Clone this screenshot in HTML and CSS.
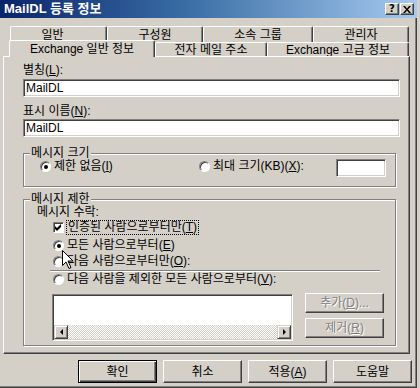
FILE: index.html
```html
<!DOCTYPE html>
<html lang="ko">
<head>
    <meta charset="UTF-8">
    <title>MailDL 등록 정보</title>
    <link rel="stylesheet" href="styles.css">
</head>
<body>
    <div class="window">
        <div class="titlebar">
            <span class="title">MailDL 등록 정보</span>
            <div class="caption-buttons">
                <span class="caption-btn">?</span>
                <span class="caption-btn">
                    <svg width="8" height="7" viewBox="0 0 8 7"><path d="M0 0h2l2 2.5 2-2.5h2l-3 3.5 3 3.5h-2l-2-2.5-2 2.5h-2l3-3.5z" fill="#000"/></svg>
                </span>
            </div>
        </div>

        <div class="tabs">
            <div class="tab-row back">
                <div class="tab t1">일반</div>
                <div class="tab t2">구성원</div>
                <div class="tab t3">소속 그룹</div>
                <div class="tab t4">관리자</div>
            </div>
            <div class="tab-row front">
                <div class="tab t5 selected">Exchange 일반 정보</div>
                <div class="tab t6">전자 메일 주소</div>
                <div class="tab t7">Exchange 고급 정보</div>
            </div>
        </div>

        <div class="panel">
            <div class="field-label">별칭(<u>L</u>):</div>
            <div class="textbox">MailDL</div>
            <div class="field-label second">표시 이름(<u>N</u>):</div>
            <div class="textbox second">MailDL</div>

            <fieldset class="group size-group">
                <legend>메시지 크기</legend>
                <div class="size-row">
                    <label class="option first"><span class="radio checked"></span>제한 없음(<u>I</u>)</label>
                    <label class="option"><span class="radio"></span>최대 크기(KB)(<u>X</u>):</label>
                    <span class="textbox small"></span>
                </div>
            </fieldset>

            <fieldset class="group limit-group">
                <legend>메시지 제한</legend>
                <div class="sub-label">메시지 수락:</div>
                <label class="option check-row">
                    <span class="checkbox"><svg width="7" height="7" viewBox="0 0 7 7"><path d="M0 2l2 2 4-4v3l-4 4-2-2z" fill="#000"/></svg></span>
                    <span class="focus">인증된 사람으로부터만(<u>T</u>)</span>
                </label>
                <label class="option opt-all"><span class="radio checked"></span>모든 사람으로부터(<u>E</u>)</label>
                <label class="option opt-only"><span class="radio"></span>다음 사람으로부터만(<u>O</u>):</label>
                <div class="separator"></div>
                <label class="option opt-except"><span class="radio"></span>다음 사람을 제외한 모든 사람으로부터(<u>V</u>):</label>
                <div class="list-row">
                    <div class="listbox">
                        <div class="list-body"></div>
                        <div class="hscroll">
                            <span class="sb-btn left"></span>
                            <span class="sb-track"></span>
                            <span class="sb-btn right"></span>
                        </div>
                    </div>
                    <div class="side-buttons">
                        <span class="btn disabled">추가(<u>D</u>)...</span>
                        <span class="btn disabled">제거(<u>R</u>)</span>
                    </div>
                </div>
            </fieldset>
        </div>

        <div class="actions">
            <span class="btn default">확인</span>
            <span class="btn">취소</span>
            <span class="btn">적용(<u>A</u>)</span>
            <span class="btn">도움말</span>
        </div>
    </div>

    <svg class="cursor" width="12" height="20" viewBox="0 0 12 20">
        <path d="M0.5 0.5v15l3.5-3.5 3 6.5 2-1-3-6.5h5z" fill="#fff" stroke="#000"/>
    </svg>
</body>
</html>
```

FILE: styles.css
```css
body
{
    margin: 0;
    background: #d4d0c8;
    font-family: "Liberation Sans", "Noto Sans CJK KR", sans-serif;
    font-size: 12px;
    color: #000;
}

u { text-underline-offset: 1px; }

.window
{
    width: 417px;
    height: 388px;
    background: #d4d0c8;
    box-shadow: inset -1px -1px #404040, inset -2px -2px #808080;
    display: flex;
    flex-direction: column;
}

/* title bar */
.titlebar
{
    height: 18px;
    display: flex;
    align-items: center;
    justify-content: space-between;
    padding: 0 3px 0 4px;
    background: linear-gradient(90deg, #0a246a, #3a6ea5 45%, #a6caf0);
}

.title
{
    color: #fff;
    font-weight: bold;
    font-size: 13px;
    line-height: 18px;
}

.caption-buttons { display: flex; gap: 1px; }

.caption-btn
{
    box-sizing: border-box;
    width: 14px;
    height: 12px;
    display: flex;
    align-items: center;
    justify-content: center;
    background: #d4d0c8;
    border: 1px solid;
    border-color: #fff #404040 #404040 #fff;
    box-shadow: inset -1px -1px #808080;
    font: bold 10px "DejaVu Sans", sans-serif;
    line-height: 1;
}

/* tabs */
.tabs { margin-top: 8px; }

.tab-row { display: flex; }
.tab-row.back { height: 16px; margin-left: 10px; }
.tab-row.front { height: 14px; margin-left: 9px; align-items: flex-end; }

.tab
{
    box-sizing: border-box;
    height: 100%;
    display: flex;
    align-items: center;
    justify-content: center;
    background: #d4d0c8;
    border-top: 1px solid #fff;
    border-left: 1px solid #fff;
    border-right: 1px solid #404040;
    box-shadow: inset -1px 0 #808080;
    border-radius: 2px 2px 0 0;
    line-height: 14px;
}

.t1 { width: 97px; padding-right: 12px; }
.t2 { width: 96px; }
.t3 { width: 110px; }
.t4 { width: 96px; }
.t5 { width: 146px; }
.t6 { width: 112px; }
.t7 { width: 142px; }

.tab.selected
{
    height: 17px;
    margin-bottom: -1px;
    position: relative;
    z-index: 1;
}

/* property page */
.panel
{
    box-sizing: border-box;
    width: 407px;
    height: 298px;
    margin-left: 3px;
    padding-left: 19px;
    border-top: 1px solid #fff;
    border-left: 1px solid #fff;
    border-right: 1px solid #404040;
    border-bottom: 1px solid #404040;
    box-shadow: inset -1px -1px #808080;
    display: flex;
    flex-direction: column;
    align-items: flex-start;
}

.field-label { margin-top: 6px; line-height: 14px; }
.field-label.second { margin-top: 7px; }

.textbox
{
    box-sizing: border-box;
    width: 377px;
    height: 18px;
    margin-top: 2px;
    padding: 0 2px;
    background: #fff;
    border: 1px solid;
    border-color: #808080 #fff #fff #808080;
    box-shadow: inset 1px 1px #404040, inset -1px -1px #d4d0c8;
    line-height: 16px;
}
.textbox.second { margin-top: 1px; }

.group
{
    box-sizing: border-box;
    width: 373px;
    min-width: 0;
    margin: 10px 0 0 0;
    padding: 0;
    border: 1px solid #808080;
    box-shadow: inset 1px 1px #fff, 1px 1px #fff;
}

.group legend
{
    margin-left: 6px;
    padding: 0 1px;
    line-height: 12px;
    background: #d4d0c8;
}

.option
{
    display: flex;
    align-items: center;
    height: 13px;
    line-height: 13px;
    white-space: nowrap;
}

.radio
{
    box-sizing: border-box;
    flex: none;
    width: 11px;
    height: 11px;
    margin-right: 3px;
    border-radius: 50%;
    background: #fff;
    border: 1px solid;
    border-color: #808080 #fff #fff #808080;
    box-shadow: inset 1px 1px #404040;
    display: flex;
    align-items: center;
    justify-content: center;
}

.radio.checked::after
{
    content: "";
    width: 4px;
    height: 4px;
    border-radius: 50%;
    background: #000;
}

.checkbox
{
    box-sizing: border-box;
    flex: none;
    width: 11px;
    height: 11px;
    margin-right: 3px;
    background: #fff;
    border: 1px solid;
    border-color: #808080 #fff #fff #808080;
    box-shadow: inset 1px 1px #404040;
    display: flex;
    align-items: center;
    justify-content: center;
}

.focus { outline: 1px dotted #000; outline-offset: 0; padding: 0 1px; }

.size-row
{
    display: flex;
    align-items: flex-start;
    margin-top: 1px;
    padding: 0 9px 9px 16px;
}
.size-row .first { width: 159px; }
.textbox.small { width: 50px; margin: -1px 0 0 auto; }

.limit-group { margin-top: 6px; padding-bottom: 4px; }

.sub-label { margin: 1px 0 0 13px; line-height: 13px; }

.limit-group .option { margin-left: 29px; }
.check-row { margin-top: 2px; }
.opt-all { margin-top: 5px; }
.opt-only { margin-top: 3px; }
.opt-except { margin-top: 1px; }

.separator
{
    width: 330px;
    height: 0;
    margin: 2px 0 0 26px;
    border-top: 1px solid #808080;
    border-bottom: 1px solid #fff;
}

.list-row
{
    display: flex;
    align-items: flex-start;
    margin: 8px 0 0 28px;
}

.listbox
{
    box-sizing: border-box;
    width: 241px;
    height: 47px;
    background: #fff;
    border: 1px solid;
    border-color: #808080 #fff #fff #808080;
    box-shadow: inset 1px 1px #404040, inset -1px -1px #d4d0c8;
    padding: 1px;
    display: flex;
    flex-direction: column;
}

.list-body { flex: 1; }

.hscroll { display: flex; height: 14px; }

.sb-track
{
    flex: 1;
    background: repeating-conic-gradient(#fff 0 25%, #d4d0c8 0 50%) 0 0 / 2px 2px;
}

.sb-btn
{
    box-sizing: border-box;
    width: 14px;
    height: 14px;
    background: #d4d0c8;
    border: 1px solid;
    border-color: #d4d0c8 #404040 #404040 #d4d0c8;
    box-shadow: inset 1px 1px #fff, inset -1px -1px #808080;
    display: flex;
    align-items: center;
    justify-content: center;
}

.sb-btn.left::after
{
    content: "";
    border-top: 3px solid transparent;
    border-bottom: 3px solid transparent;
    border-right: 3px solid #000;
}

.sb-btn.right::after
{
    content: "";
    border-top: 3px solid transparent;
    border-bottom: 3px solid transparent;
    border-left: 3px solid #000;
}

.side-buttons
{
    display: flex;
    flex-direction: column;
    gap: 5px;
    margin: -1px 0 0 12px;
}

.btn
{
    box-sizing: border-box;
    width: 79px;
    height: 23px;
    display: flex;
    align-items: center;
    justify-content: center;
    background: #d4d0c8;
    border: 1px solid;
    border-color: #fff #404040 #404040 #fff;
    box-shadow: inset -1px -1px #808080;
    line-height: 14px;
}

.side-buttons .btn { height: 20px; }

.btn.disabled
{
    color: #808080;
    text-shadow: 1px 1px #fff;
}

.btn.default
{
    border-color: #000;
    box-shadow: inset 1px 1px #fff, inset -1px -1px #404040, inset -2px -2px #808080;
}

/* dialog buttons */
.actions
{
    display: flex;
    justify-content: flex-end;
    gap: 6px;
    margin-top: 6px;
    padding-right: 5px;
}

.cursor
{
    position: absolute;
    left: 62px;
    top: 250px;
}
```
